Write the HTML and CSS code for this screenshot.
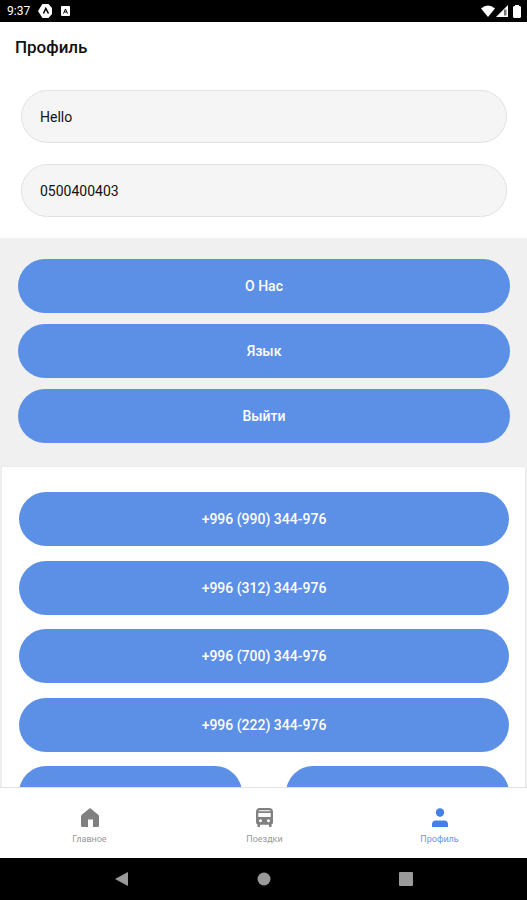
FILE: index.html
```html
<!DOCTYPE html>
<html lang="ru">
<head>
<meta charset="utf-8">
<meta name="viewport" content="width=device-width, initial-scale=1">
<title>Профиль</title>
<link rel="stylesheet" href="styles.css">
</head>
<body>
<div class="app">
  <div class="status">
    <div class="status-group">
      <span class="clock">9:37</span>
      <svg width="15" height="14" viewBox="0 0 15 14" aria-hidden="true"><path d="M4.500 0h6L14 4v6l-3.500 4h-6L2.500 11 0 7l2.500-4z" fill="#fff"/><path d="M5.500 9.500 7.800 4.500 10.500 9.500" fill="none" stroke="#000" stroke-width="1.500"/></svg>
      <svg width="9" height="10" viewBox="0 0 9 10" aria-hidden="true"><rect width="9" height="10" rx="1" fill="#fff"/><path d="M2.500 7.500 4.500 3 6.500 7.500M3.500 6h2" fill="none" stroke="#000" stroke-width="1"/></svg>
    </div>
    <div class="status-icons">
      <svg width="14" height="12" viewBox="0 0 14 12" aria-hidden="true"><path d="M0 3.500Q7-2.500 14 3.500L7 12z" fill="#fff"/></svg>
      <svg width="12" height="12" viewBox="0 0 12 12" aria-hidden="true"><path d="M12 0v12H0z" fill="#fff"/><path d="M8 4.500h2.500v6H8z" fill="#777"/></svg>
      <svg class="battery" width="8" height="13" viewBox="0 0 8 13" aria-hidden="true"><path d="M2 0h4v1h1l1 1v10l-1 1H1l-1-1V2l1-1h1z" fill="#fff"/></svg>
    </div>
  </div>
  <header class="header"><h1>Профиль</h1></header>
  <main class="content">
    <form class="form">
      <input type="text" value="Hello" aria-label="Имя">
      <input type="tel" value="0500400403" aria-label="Телефон">
    </form>
    <section class="actions">
      <button class="pill" type="button">О Нас</button>
      <button class="pill" type="button">Язык</button>
      <button class="pill" type="button">Выйти</button>
    </section>
    <section class="contacts">
      <div class="contact-group">
        <button class="pill" type="button">+996 (990) 344-976</button>
        <button class="pill" type="button">+996 (312) 344-976</button>
      </div>
      <div class="contact-group">
        <button class="pill" type="button">+996 (700) 344-976</button>
        <button class="pill" type="button">+996 (222) 344-976</button>
      </div>
      <div class="links">
        <button class="pill" type="button"></button>
        <button class="pill" type="button"></button>
      </div>
    </section>
  </main>
  <nav class="tabs">
    <a class="tab" href="#home">
      <svg width="18" height="20" viewBox="0 0 18 20" aria-hidden="true"><path d="M9 0 17 6.500Q18 7.300 18 8.500V17.500Q18 19 16.500 19H12V11.500H7V19H1.500Q0 19 0 17.500V8.500Q0 7.300 1 6.500z" fill="currentColor"/></svg>
      <span>Главное</span>
    </a>
    <a class="tab" href="#trips">
      <svg width="18" height="20" viewBox="0 0 18 20" aria-hidden="true"><path fill="currentColor" fill-rule="evenodd" d="M4 0H13Q17 0 17 4V14Q17 16 15.500 16.500V19H13V16.800H4V19H1.500V16.500Q0 16 0 14V4Q0 0 4 0zM4 2.300Q2.500 2.300 2.300 3.300H14.700Q14.500 2.300 13 2.300zM2.300 5V9H14.700V5zM4.500 11.200a1.500 1.500 0 1 0 .01 0zM12.500 11.200a1.500 1.500 0 1 0 .01 0z"/></svg>
      <span>Поездки</span>
    </a>
    <a class="tab active" href="#profile" aria-current="page">
      <svg width="18" height="20" viewBox="0 0 18 20" aria-hidden="true"><circle cx="9" cy="4.500" r="4.200" fill="currentColor"/><path d="M1 19V16.500Q1 12.500 5 12.500H13Q17 12.500 17 16.500V19z" fill="currentColor"/></svg>
      <span>Профиль</span>
    </a>
  </nav>
  <div class="system">
    <button type="button" aria-label="Назад"><svg width="14" height="14" viewBox="0 0 14 14"><path d="M13 0v14L0 7z" fill="#9a9a9a"/></svg></button>
    <button type="button" aria-label="Домой"><svg width="14" height="14" viewBox="0 0 14 14"><circle cx="7" cy="7" r="6.500" fill="#9a9a9a"/></svg></button>
    <button type="button" aria-label="Обзор"><svg width="14" height="14" viewBox="0 0 14 14"><rect width="14" height="14" rx="1" fill="#9a9a9a"/></svg></button>
  </div>
</div>
</body>
</html>
```
FILE: styles.css
```css
* {
  box-sizing: border-box;
}

body {
  margin: 0;
  background: #fff;
  color: #111;
  font-family: Roboto, "Noto Sans", sans-serif;
}

button {
  border: 0;
  padding: 0;
  font: inherit;
}

svg {
  display: block;
}

.app {
  display: flex;
  flex-direction: column;
  height: 100vh;
}

.status {
  display: flex;
  flex: none;
  justify-content: space-between;
  align-items: center;
  height: 22px;
  padding: 0 6px 0 7px;
  background: #000;
  color: #fff;
}

.status-group {
  display: flex;
  align-items: center;
  gap: 8px;
}

.status-icons {
  display: flex;
  align-items: center;
  gap: 1px;
}

.battery {
  margin-left: 4px;
}

.clock {
  font-size: 12px;
  line-height: 20px;
}

.header {
  flex: none;
  padding: 13px 15px;
}

.header h1 {
  margin: 0;
  font-size: 17px;
  line-height: 24px;
  font-weight: 500;
}

.content {
  flex: 1;
  min-height: 0;
  overflow: hidden;
  background: #f0f0f0;
}

.form {
  display: flex;
  flex-direction: column;
  gap: 21px;
  padding: 18px 20px 21px 21px;
  background: #fff;
}

.form input {
  width: 100%;
  height: 53px;
  padding: 0 18px;
  border: 1px solid #dfe1e1;
  border-radius: 27px;
  background: #f5f5f5;
  color: #111;
  font: 400 14px/20px Roboto, "Noto Sans", sans-serif;
}

.actions {
  display: flex;
  flex-direction: column;
  gap: 11px;
  padding: 21px 17px 23px 18px;
}

.pill {
  width: 100%;
  height: 54px;
  border-radius: 27px;
  background: #5c90e6;
  color: #fff;
  font-size: 14px;
  line-height: 20px;
  font-weight: 500;
}

.contacts {
  display: flex;
  flex-direction: column;
  gap: 14px;
  margin: 0 1px;
  padding: 25px 16px 25px 17px;
  border: 1px solid #ebebeb;
  background: #fff;
}

.contact-group {
  display: grid;
  gap: 15px;
}

.links {
  display: grid;
  grid-template-columns: 1fr 1fr;
  gap: 44px;
}

.tabs {
  display: grid;
  flex: none;
  grid-template-columns: repeat(3, 1fr);
  height: 71px;
  padding: 20px 0 0 2px;
  border-top: 1px solid #e2e2e2;
  background: #fff;
}

.tab {
  display: flex;
  flex-direction: column;
  align-items: center;
  gap: 5px;
  color: #808080;
  font-size: 9px;
  line-height: 12px;
  text-decoration: none;
}

.tab span {
  opacity: 0.8;
}

.tab.active {
  color: #4580e4;
}

.system {
  display: flex;
  flex: none;
  justify-content: center;
  align-items: center;
  gap: 128px;
  height: 42px;
  background: #000;
}

.system button {
  background: none;
}
```
